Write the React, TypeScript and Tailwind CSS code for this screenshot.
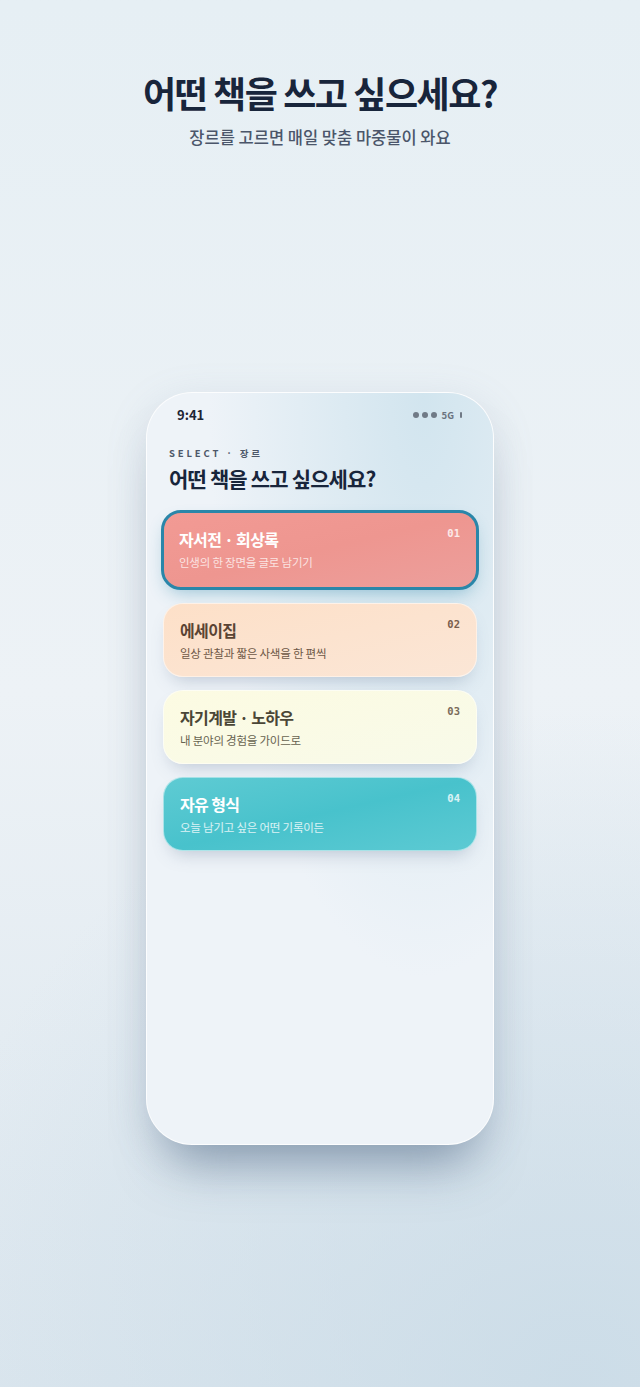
import React from 'react';

type Genre = {
  no: string;
  title: string;
  desc: string;
  card: string;
  titleColor: string;
  descColor: string;
  noColor: string;
};

const genres: Genre[] = [
  {
    no: '01',
    title: '자서전 · 회상록',
    desc: '인생의 한 장면을 글로 남기기',
    card: 'bg-gradient-to-br from-[#f29a94] via-[#ee9690] to-[#ec9f9c]',
    titleColor: 'text-white',
    descColor: 'text-white/75',
    noColor: 'text-white/80',
  },
  {
    no: '02',
    title: '에세이집',
    desc: '일상 관찰과 짧은 사색을 한 편씩',
    card: 'bg-gradient-to-br from-[#fde0c8] to-[#fbe6d6]',
    titleColor: 'text-[#5a4434]',
    descColor: 'text-[#6d5746]',
    noColor: 'text-[#7a5e4c]',
  },
  {
    no: '03',
    title: '자기계발 · 노하우',
    desc: '내 분야의 경험을 가이드로',
    card: 'bg-gradient-to-br from-[#fcfbe2] to-[#f8fae9]',
    titleColor: 'text-[#4a4636]',
    descColor: 'text-[#676350]',
    noColor: 'text-[#7a6c5a]',
  },
  {
    no: '04',
    title: '자유 형식',
    desc: '오늘 남기고 싶은 어떤 기록이든',
    card: 'bg-gradient-to-br from-[#5ecbd3] via-[#48c2cc] to-[#5ccad3]',
    titleColor: 'text-white',
    descColor: 'text-white/80',
    noColor: 'text-white/80',
  },
];

const GenreCard: React.FC<{ genre: Genre; selected?: boolean }> = ({ genre, selected }) => (
  <div
    className={`relative rounded-[20px] px-4 pt-[15px] ${genre.card} ${
      selected
        ? 'mx-[14px] h-[80px] border-[3px] border-[#2a86a9] pl-[15px] shadow-[0_8px_18px_-6px_rgba(42,134,169,0.45)]'
        : 'mx-4 h-[74px] border border-white/50 shadow-[0_10px_18px_-8px_rgba(90,110,140,0.35)]'
    }`}
  >
    <div className={`text-[16px] font-bold leading-[22px] tracking-[-0.04em] ${genre.titleColor}`}>{genre.title}</div>
    <div className={`mt-[4px] text-[11.5px] leading-[16px] tracking-[-0.02em] ${genre.descColor}`}>{genre.desc}</div>
    <div
      className={`absolute right-[16px] top-[13px] font-['DejaVu_Sans_Mono',monospace] text-[10.5px] font-bold ${genre.noColor}`}
    >
      {genre.no}
    </div>
  </div>
);

const App: React.FC = () => {
  return (
    <div className="min-h-[1387px] w-full bg-gradient-to-b from-[#e6eff4] via-[#edf2f6] to-[#dbe6ee] font-['Noto_Sans_CJK_KR','Noto_Sans',sans-serif]">
      <div className="min-h-[1387px] bg-[radial-gradient(circle_at_90%_100%,rgba(200,218,230,0.8),transparent_45%)] pt-[70px]">
        <section className="text-center">
          <h1 className="text-[36px] font-bold leading-[44px] tracking-[-0.04em] text-[#18253b]">
            어떤 책을 쓰고 싶으세요?
          </h1>
          <p className="mt-[11px] text-[16.5px] font-medium leading-[24px] text-[#4b566a]">
            장르를 고르면 매일 맞춤 마중물이 와요
          </p>
        </section>

        <div className="mx-auto mt-[243px] h-[753px] w-[348px] overflow-hidden rounded-[46px] border border-white/80 bg-[#eef3f8] shadow-[0_40px_50px_-22px_rgba(70,95,125,0.5),0_10px_40px_rgba(120,140,165,0.18)]">
          <div className="h-full bg-[radial-gradient(ellipse_at_80%_0%,rgba(208,228,238,0.95),transparent_55%)]">
            <div className="flex items-center justify-between pl-[30px] pr-[31px] pt-[12px]">
              <span className="text-[13px] font-bold text-[#1c2433]">9:41</span>
              <div className="flex items-center gap-[3px] text-[#6a7380]">
                <span className="h-[6px] w-[6px] rounded-full bg-[#707a86]" />
                <span className="h-[6px] w-[6px] rounded-full bg-[#707a86]" />
                <span className="h-[6px] w-[6px] rounded-full bg-[#707a86]" />
                <span className="ml-[2px] text-[9.5px] font-bold">5G</span>
                <span className="ml-[3px] h-[6px] w-[2px] rounded-[1px] bg-[#707a86]" />
              </div>
            </div>

            <div className="px-[22px] pt-[21px]">
              <div className="text-[9.5px] font-bold tracking-[0.3em] text-[#4d5869]">SELECT · 장르</div>
              <h2 className="mt-[4px] text-[21px] font-bold leading-[28px] tracking-[-0.04em] text-[#18253b]">
                어떤 책을 쓰고 싶으세요?
              </h2>
            </div>

            <div className="mt-[18px] flex flex-col gap-[13px]">
              {genres.map((g, i) => (
                <GenreCard key={g.no} genre={g} selected={i === 0} />
              ))}
            </div>
          </div>
        </div>
      </div>
    </div>
  );
};

export default App;
